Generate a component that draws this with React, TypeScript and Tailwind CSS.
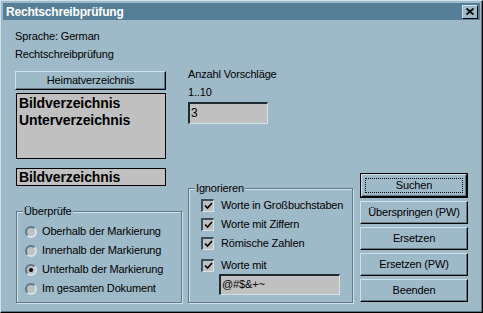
import React from 'react';

const Raised = ({ children, className = '' }: { children: React.ReactNode; className?: string }) => (
  <div
    className={`flex items-center justify-center border-t border-l border-t-[#cfe1ea] border-l-[#cfe1ea] border-r border-b border-r-black border-b-black shadow-[inset_-1px_-1px_0_#5f7888] ${className}`}
  >
    {children}
  </div>
);

const Group = ({ label, children, className = '' }: { label: string; children: React.ReactNode; className?: string }) => (
  <div className={`relative border border-[#5f7888] shadow-[inset_1px_1px_0_#d3e3eb,1px_1px_0_#d3e3eb] ${className}`}>
    <span className="absolute left-[6px] top-[-8px] bg-[#9eb9c8] px-[1px] leading-[14px]">{label}</span>
    {children}
  </div>
);

const Radio = ({ label, checked = false }: { label: string; checked?: boolean }) => (
  <div className="flex items-center h-[19px]">
    <div className="w-[12px] h-[12px] rounded-full border-2 border-t-[#5f7888] border-l-[#5f7888] border-r-[#d3e3eb] border-b-[#d3e3eb] bg-[#c0c0c0] flex items-center justify-center">
      {checked && <div className="w-[4px] h-[4px] rounded-full bg-black" />}
    </div>
    <span className="ml-[5px]">{label}</span>
  </div>
);

const Check = ({ label, className = '' }: { label: string; className?: string }) => (
  <div className={`flex items-center h-[19px] ${className}`}>
    <div className="w-[13px] h-[13px] border-t-2 border-l-2 border-t-[#3c4e59] border-l-[#3c4e59] border-r border-b border-r-[#d3e3eb] border-b-[#d3e3eb] bg-[#c0c0c0] flex items-center justify-center">
      <svg width="9" height="8" viewBox="0 0 9 8">
        <path d="M1 3.5 L3.5 6 L8 1" stroke="#000" strokeWidth="1.6" fill="none" />
      </svg>
    </div>
    <span className="ml-[7px]">{label}</span>
  </div>
);

export default function App() {
  return (
    <div className="w-[483px] h-[313px] bg-[#9eb9c8] border border-t-[#cfe1ea] border-l-[#cfe1ea] border-r-black border-b-black shadow-[inset_-1px_-1px_0_#5f7888] p-[2px] font-['Liberation_Sans',Arial,sans-serif] text-[11px] tracking-[-0.15px] text-black flex flex-col">
      {/* Title bar */}
      <div className="h-[17px] bg-[#557f98] flex items-center justify-between pl-[3px] pr-[2px]">
        <span className="text-white font-bold text-[12px] tracking-[-0.2px] leading-none">Rechtschreibprüfung</span>
        <div className="w-[16px] h-[14px] bg-[#9eb9c8] border-t border-l border-t-[#cfe1ea] border-l-[#cfe1ea] border-r border-b border-r-black border-b-black flex items-center justify-center">
          <svg width="8" height="7" viewBox="0 0 8 7">
            <path d="M0.5 0.5 L7.5 6.5 M7.5 0.5 L0.5 6.5" stroke="#000" strokeWidth="1.8" />
          </svg>
        </div>
      </div>

      <div className="px-[12px]">
        <div className="mt-[7px] leading-[18px]">Sprache: German</div>
        <div className="leading-[18px]">Rechtschreibprüfung</div>

        <div className="flex items-start">
          {/* Left column */}
          <div className="w-[167px] flex flex-col">
            <Raised className="mt-[8px] w-[151px] h-[19px]">Heimatverzeichnis</Raised>
            <div className="mt-[3px] ml-[1px] w-[150px] h-[66px] border border-black bg-[#c0c0c0] px-[2px] pt-[1px] font-bold text-[14px] tracking-[-0.1px] leading-[17px]">
              <div>Bildverzeichnis</div>
              <div>Unterverzeichnis</div>
            </div>
            <div className="mt-[9px] ml-[1px] w-[150px] h-[18px] border border-black bg-[#c0c0c0] px-[2px] font-bold text-[14px] tracking-[-0.1px] leading-[16px]">
              Bildverzeichnis
            </div>
            <Group label="Überprüfe" className="mt-[25px] ml-[1px] w-[166px] h-[92px] pl-[8px] pt-[10px]">
              <Radio label="Oberhalb der Markierung" />
              <Radio label="Innerhalb der Markierung" />
              <Radio label="Unterhalb der Markierung" checked />
              <Radio label="Im gesamten Dokument" />
            </Group>
          </div>

          {/* Middle column */}
          <div className="ml-[6px] w-[165px] flex flex-col">
            <div className="mt-[2px] leading-[18px]">Anzahl Vorschläge</div>
            <div className="leading-[18px]">1..10</div>
            <div className="mt-[1px] w-[80px] h-[22px] border-t-2 border-l-2 border-t-[#1e2a31] border-l-[#1e2a31] border-r border-b border-r-[#d3e3eb] border-b-[#d3e3eb] bg-[#c0c0c0] px-[1px] leading-[18px] text-[12px]">
              3
            </div>
            <Group label="Ignorieren" className="mt-[64px] w-[165px] h-[115px] pl-[12px] pt-[7px]">
              <Check label="Worte in Großbuchstaben" />
              <Check label="Worte mit Ziffern" />
              <Check label="Römische Zahlen" />
              <Check label="Worte mit" className="mt-[3px]" />
              <div className="mt-[-1px] ml-[18px] w-[121px] h-[21px] border-t-2 border-l-2 border-t-[#1e2a31] border-l-[#1e2a31] border-r border-b border-r-[#d3e3eb] border-b-[#d3e3eb] bg-[#c0c0c0] px-[1px] leading-[17px]">
                @#$&+~
              </div>
            </Group>
          </div>

          {/* Right column */}
          <div className="ml-[7px] w-[114px] flex flex-col gap-[3px] mt-[110px]">
            <div className="h-[25px] border border-black flex">
              <Raised className="flex-1 p-[3px]">
                <div className="w-full h-full border border-dotted border-black flex items-center justify-center leading-none">
                  Suchen
                </div>
              </Raised>
            </div>
            <Raised className="h-[23px]">Überspringen (PW)</Raised>
            <Raised className="h-[23px]">Ersetzen</Raised>
            <Raised className="h-[23px]">Ersetzen (PW)</Raised>
            <Raised className="h-[23px]">Beenden</Raised>
          </div>
        </div>
      </div>
    </div>
  );
}
